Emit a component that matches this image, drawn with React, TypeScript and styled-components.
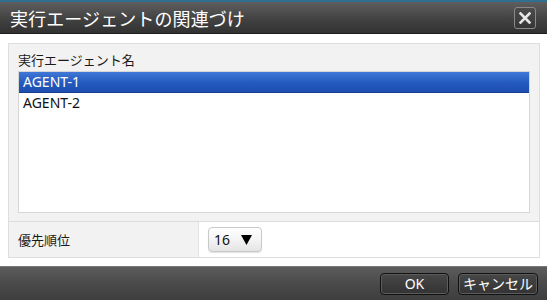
import React from "react";
import styled, { createGlobalStyle } from "styled-components";

const Global = createGlobalStyle`
  html, body { margin: 0; padding: 0; background: #ffffff; }
  body { font-family: "Noto Sans", "Noto Sans CJK JP", sans-serif; }
  #root { width: 549px; height: 300px; overflow: hidden; }
`;

const Dialog = styled.div`
  width: 547px;
  height: 300px;
  display: flex;
  flex-direction: column;
  background: #ffffff;
`;

const TitleBar = styled.div`
  height: 34px;
  box-sizing: border-box;
  border-top: 2px solid #2f6f8f;
  border-bottom: 1px solid #1e1e1e;
  background: linear-gradient(#5e5e5e, #424242 55%, #323232);
  display: flex;
  align-items: center;
  justify-content: space-between;
  padding: 0 11px 0 10px;
`;

const Title = styled.div`
  color: #ffffff;
  font-family: "Noto Sans CJK JP", sans-serif;
  font-size: 18px;
  line-height: 22px;
  letter-spacing: 0.1px;
`;

const CloseButton = styled.div`
  width: 22px;
  height: 22px;
  box-sizing: border-box;
  border: 1px solid #8a8a8a;
  border-radius: 3px;
  background: linear-gradient(#4c4c4c, #363636);
  display: flex;
  align-items: center;
  justify-content: center;
`;

const Body = styled.div`
  flex: 1;
  padding: 9px 7px 8px 8px;
  display: flex;
  flex-direction: column;
`;

const Panel = styled.div`
  flex: 1;
  border: 1px solid #dedede;
  background: #f2f2f2;
  display: flex;
  flex-direction: column;
`;

const TopSection = styled.div`
  flex: 1;
  padding: 7px 9px 8px 9px;
  display: flex;
  flex-direction: column;
  border-bottom: 1px solid #dcdcdc;
`;

const FieldLabel = styled.div`
  font-family: "Noto Sans CJK JP", sans-serif;
  font-size: 13px;
  line-height: 18px;
  color: #1a1a1a;
  margin-bottom: 2px;
`;

const ListBox = styled.div`
  flex: 1;
  background: #ffffff;
  border: 1px solid #d6d6d6;
  display: flex;
  flex-direction: column;
`;

const ListItem = styled.div<{ $selected?: boolean }>`
  height: 20px;
  line-height: 20px;
  padding-left: 4px;
  font-size: 14px;
  color: ${(p) => (p.$selected ? "#ffffff" : "#111111")};
  background: ${(p) =>
    p.$selected ? "linear-gradient(#3f78d6, #2459bd 55%, #1d4fb0)" : "transparent"};
  border-bottom: 1px solid ${(p) => (p.$selected ? "#173f8f" : "transparent")};
`;

const BottomRow = styled.div`
  height: 35px;
  display: grid;
  grid-template-columns: 189px 1fr;
`;

const LabelCell = styled.div`
  display: flex;
  align-items: center;
  padding-left: 9px;
  font-family: "Noto Sans CJK JP", sans-serif;
  font-size: 13px;
  color: #1a1a1a;
`;

const ValueCell = styled.div`
  background: #ffffff;
  border-left: 1px solid #e2e2e2;
  display: flex;
  align-items: center;
  padding-left: 9px;
`;

const Select = styled.div`
  width: 54px;
  height: 25px;
  box-sizing: border-box;
  border: 1px solid #c9c9c9;
  border-radius: 4px;
  background: linear-gradient(#ffffff, #f4f4f4 50%, #e4e4e4);
  box-shadow: 0 1px 1px rgba(0, 0, 0, 0.12);
  display: flex;
  align-items: center;
  padding-left: 5px;
  gap: 11px;
  font-size: 14px;
  color: #111111;
`;

const Footer = styled.div`
  height: 34px;
  box-sizing: border-box;
  border-top: 1px solid #7a7a7a;
  background: linear-gradient(#5c5c5c, #4a4a4a 50%, #3e3e3e);
  display: flex;
  align-items: center;
  justify-content: flex-end;
  gap: 9px;
  padding: 0 9px 0 0;
`;

const FooterButton = styled.div<{ $w: number }>`
  width: ${(p) => p.$w}px;
  height: 22px;
  box-sizing: border-box;
  border: 1px solid #111111;
  border-radius: 4px;
  background: linear-gradient(#474747, #333333);
  box-shadow: inset 0 0 0 1px #5c5c5c;
  color: #ffffff;
  font-family: "Noto Sans", "Noto Sans CJK JP", sans-serif;
  font-size: 14px;
  display: flex;
  align-items: center;
  justify-content: center;
  line-height: 1;
`;

export default function App() {
  return (
    <>
      <Global />
      <Dialog>
        <TitleBar>
          <Title>実行エージェントの関連づけ</Title>
          <CloseButton>
            <svg width="12" height="12" viewBox="0 0 12 12">
              <path d="M1.5 1.5 L10.5 10.5 M10.5 1.5 L1.5 10.5" stroke="#e6e6e6" strokeWidth="2.6" strokeLinecap="square" />
            </svg>
          </CloseButton>
        </TitleBar>
        <Body>
          <Panel>
            <TopSection>
              <FieldLabel>実行エージェント名</FieldLabel>
              <ListBox>
                <ListItem $selected>AGENT-1</ListItem>
                <ListItem>AGENT-2</ListItem>
              </ListBox>
            </TopSection>
            <BottomRow>
              <LabelCell>優先順位</LabelCell>
              <ValueCell>
                <Select>
                  <span>16</span>
                  <svg width="11" height="11" viewBox="0 0 11 11">
                    <path d="M0 1 L11 1 L5.5 11 Z" fill="#000000" />
                  </svg>
                </Select>
              </ValueCell>
            </BottomRow>
          </Panel>
        </Body>
        <Footer>
          <FooterButton $w={69}>OK</FooterButton>
          <FooterButton $w={80}>キャンセル</FooterButton>
        </Footer>
      </Dialog>
    </>
  );
}
